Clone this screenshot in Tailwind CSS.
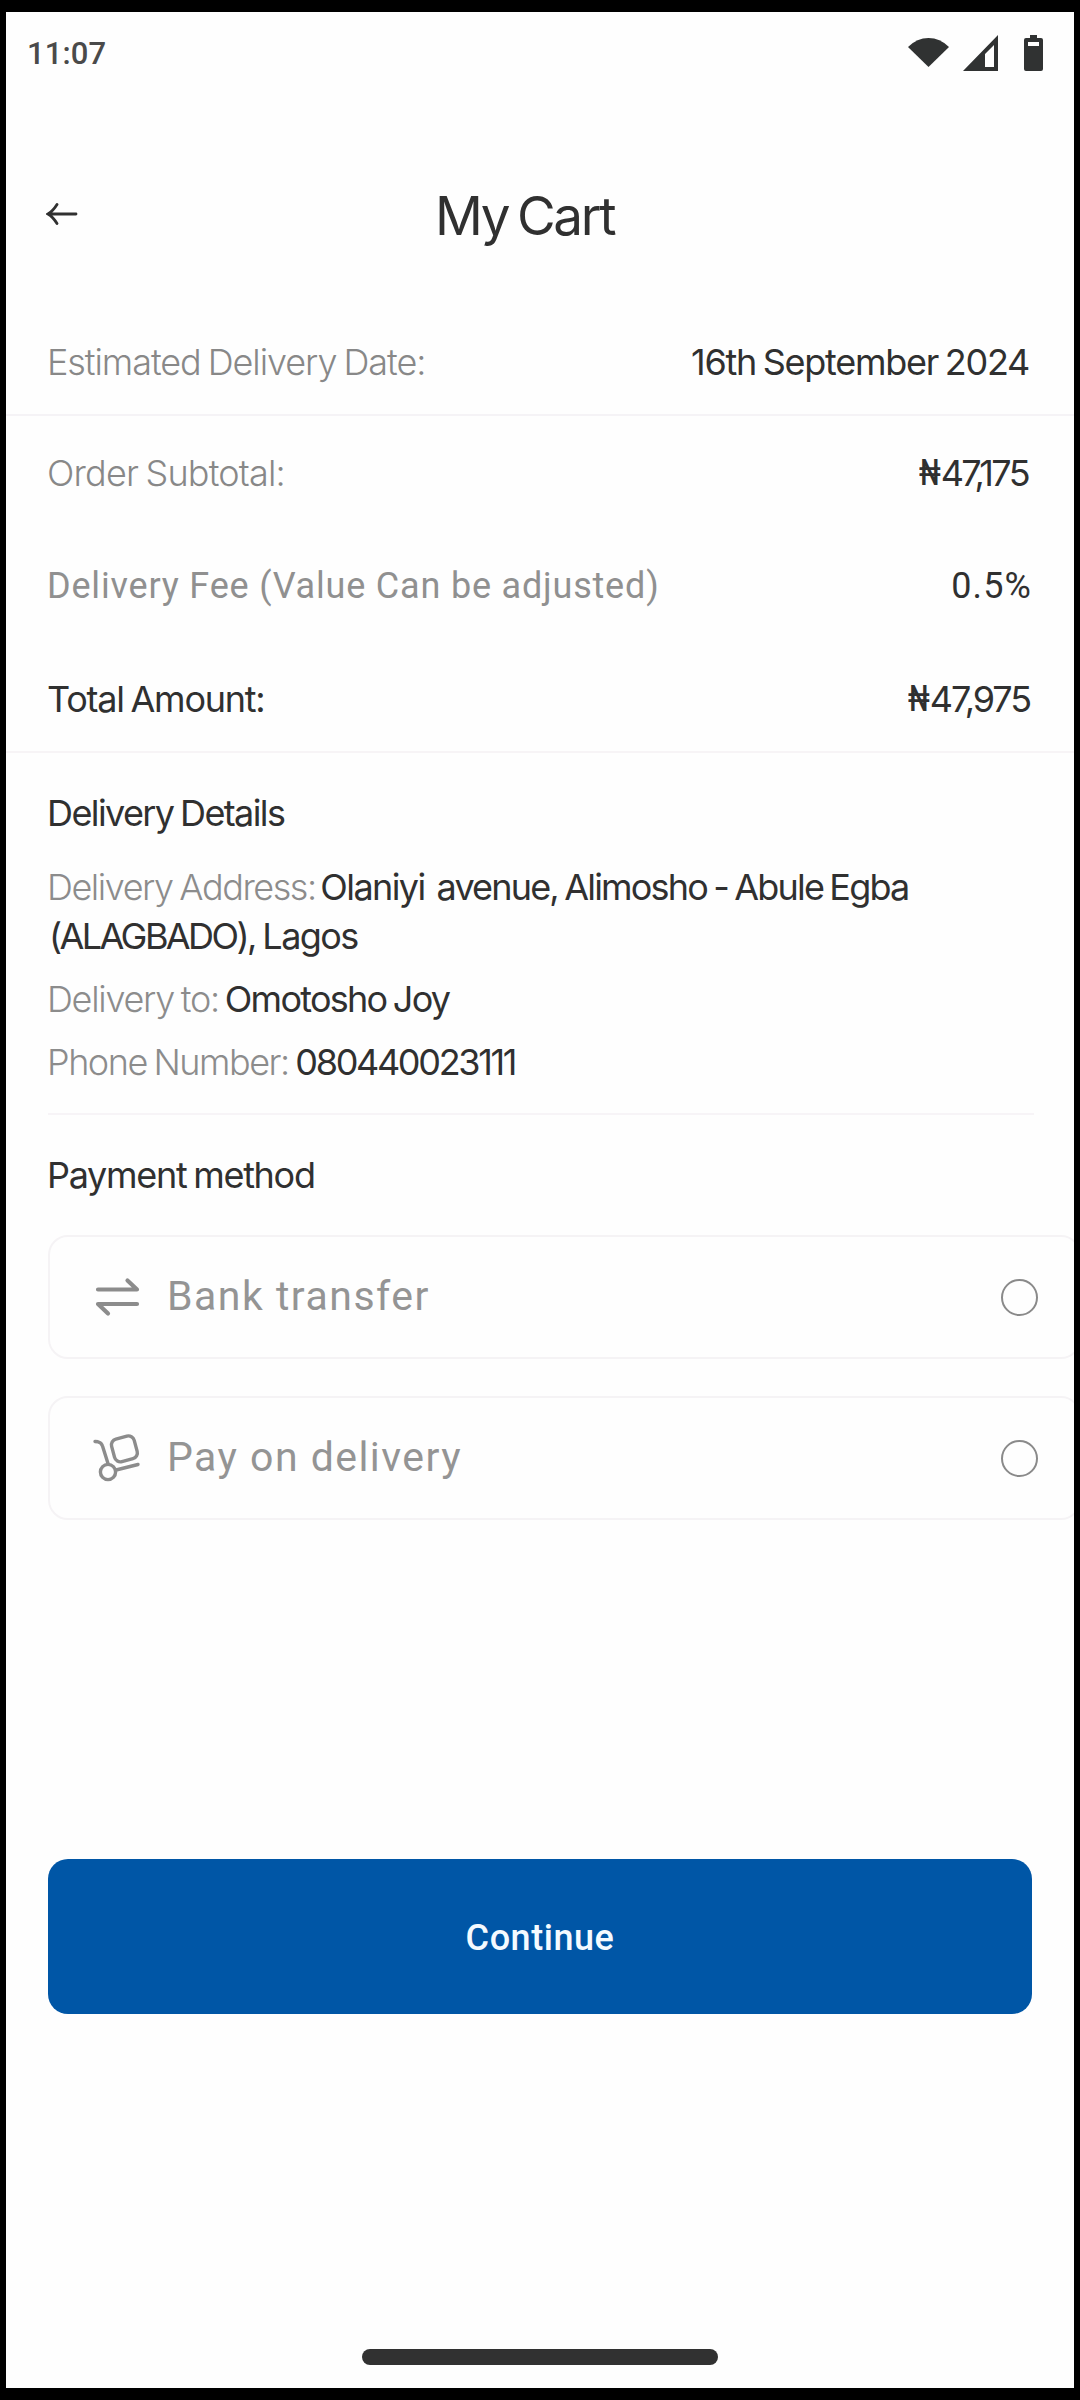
<!DOCTYPE html>
<html lang="en">
<head>
<meta charset="utf-8">
<title>My Cart</title>
<script src="https://cdn.jsdelivr.net/npm/@tailwindcss/browser@4"></script>
</head>
<body class="bg-black">
<div class="flex h-[2400px] w-[1080px] bg-black px-[6px] py-[12px]">
<main class="flex w-[1068px] flex-col overflow-hidden bg-[#fefefe] font-['Inter',sans-serif] text-[36px] leading-[48px] whitespace-nowrap text-[#303030]">

  <!-- Status bar -->
  <div class="flex h-[82px] shrink-0 items-center justify-between pr-[31px] pl-[21px]">
    <span class="pt-[2px] font-['Roboto',sans-serif] text-[31px] font-medium tracking-[0.1px] text-[#4a4a4a]">11:07</span>
    <div class="flex items-center text-[#303232]">
      <svg class="mr-[14px] h-[36px] w-[41px]" viewBox="0 0 41 36" fill="currentColor"><path d="M0 12Q9 3 20.500 3T41 12L20.500 32Z"/></svg>
      <svg class="mr-[26px] h-[36px] w-[35px]" viewBox="0 0 35 36" fill="currentColor"><path fill-rule="evenodd" d="M35 0V36H0ZM31 10L22 19V32H31Z"/></svg>
      <svg class="h-[36px] w-[19px]" viewBox="0 0 19 36" fill="currentColor"><path fill-rule="evenodd" d="M6 0H13V3H17Q19 3 19 5V34Q19 36 17 36H2Q0 36 0 34V5Q0 3 2 3H6ZM4 7V11H15V7Z"/></svg>
    </div>
  </div>

  <!-- Title -->
  <header class="grid h-[244px] shrink-0 grid-cols-[389px_1fr] items-center pl-[40px]">
    <svg class="mb-[5px] h-[24px] w-[32px]" viewBox="0 0 32 24" fill="none" stroke="#303030" stroke-width="2.800" stroke-linecap="round"><path d="M2 12H30M11 2.500Q7 9 2 12Q7 15 11 21.500"/></svg>
    <h1 class="text-[53px] font-normal tracking-[-2.3px] [word-spacing:-4px]">My Cart</h1>
  </header>

  <!-- Delivery date -->
  <section class="flex shrink-0 justify-between border-b-2 border-[#f5f3f6] pr-[45px] pb-[28px] pl-[41px] [word-spacing:-2px]">
    <span class="font-light tracking-[-1.07px] text-[#888]">Estimated Delivery Date:</span>
    <span class="tracking-[-1.28px]">16th September 2024</span>
  </section>

  <!-- Totals -->
  <section class="flex shrink-0 flex-col border-b-2 border-[#f7f4f6] pt-[33px] pr-[44px] pb-[28px] pl-[41px]">
    <div class="flex h-[48px] justify-between">
      <span class="font-light tracking-[-0.8px] text-[#888] [word-spacing:-2px]">Order Subtotal:</span>
      <span class="mr-[2px] tracking-[-2.6px]"><span class="mr-[-7px] inline-block h-[48px] origin-left scale-x-75 align-top font-['Roboto',sans-serif] font-medium tracking-normal">₦</span>47,175</span>
    </div>
    <div class="mt-[65px] flex h-[48px] justify-between font-['Roboto',sans-serif]">
      <span class="tracking-[0.81px] text-[#909090]">Delivery Fee (Value Can be adjusted)</span>
      <span class="mr-[-2px] tracking-[1.1px]">0.5%</span>
    </div>
    <div class="mt-[65px] flex h-[48px] justify-between">
      <span class="tracking-[-1.25px] [word-spacing:-2px]">Total Amount:</span>
      <span class="tracking-[-2.1px]"><span class="mr-[-7px] inline-block h-[48px] origin-left scale-x-75 align-top font-['Roboto',sans-serif] font-medium tracking-normal">₦</span>47,975</span>
    </div>
  </section>

  <!-- Delivery details -->
  <section class="mr-[40px] ml-[42px] flex shrink-0 flex-col border-b-2 border-[#f7f4f7] pt-[36px] pb-[26px] [word-spacing:-2px]">
    <h2 class="ml-[-1px] tracking-[-1.6px]">Delivery Details</h2>
    <p class="mt-[26px] ml-[-1px] h-[100px] leading-[49px]"><span class="font-light tracking-[-1.45px] text-[#8c8c8c]">Delivery Address: </span><span class="ml-[-2px] tracking-[-1.61px]">Olaniyi&nbsp; </span><span class="ml-[-1px] tracking-[-1.82px]">avenue, Alimosho - Abule Egba</span><br><span class="ml-[2px] tracking-[-2.58px] [word-spacing:0px]">(ALAGBADO), </span><span class="tracking-[-1.56px]">Lagos</span></p>
    <p class="mt-[11px] ml-[-1px] h-[50px] leading-[50px]"><span class="font-light tracking-[-1.28px] text-[#8c8c8c]">Delivery to: </span><span class="ml-[-1px] tracking-[-1.74px]">Omotosho Joy</span></p>
    <p class="mt-[13px] ml-[-1px] h-[50px] leading-[50px]"><span class="font-light tracking-[-1.48px] text-[#8c8c8c]">Phone Number: </span><span class="tracking-[-2.33px]">080440023111</span></p>
  </section>

  <!-- Payment method -->
  <section class="flex shrink-0 flex-col pt-[36px] pl-[42px]">
    <h2 class="ml-[-1px] tracking-[-1.3px] [word-spacing:-2px]">Payment method</h2>
    <div class="mt-[36px] flex flex-col gap-[37px] font-['Roboto',sans-serif] text-[41px] text-[#949494]">
      <div class="flex h-[124px] w-[1033px] items-center rounded-[20px] border-2 border-[#f5f3f5] pr-[41px] pl-[42px]">
        <svg class="h-[52px] w-[50px]" viewBox="0 0 50 52" fill="none" stroke="#8c8c8c" stroke-width="4.200" stroke-linecap="round" stroke-linejoin="round"><path d="M6 18.500H45L35.500 9.500M45 33H6L16 42.500"/></svg>
        <span class="mb-[2px] ml-[25px] tracking-[1.5px]">Bank transfer</span>
        <span class="ml-auto size-[37px] rounded-full border-[2.500px] border-[#8a8a8a]"></span>
      </div>
      <div class="flex h-[124px] w-[1033px] items-center rounded-[20px] border-2 border-[#f5f3f5] pr-[41px] pl-[42px]">
        <svg class="h-[52px] w-[50px]" viewBox="0 0 50 52" fill="none" stroke="#8c8c8c" stroke-width="3.400" stroke-linecap="round"><path d="M3 9.500L6 9.800Q9.500 10.500 10.500 14L16 31.500M24 38L46 32.500"/><circle cx="16" cy="40" r="7.600"/><rect x="20.700" y="5.200" width="23.400" height="23.400" rx="6" transform="rotate(-15 32.400 16.900)"/></svg>
        <span class="mb-[2px] ml-[25px] tracking-[1.46px]">Pay on delivery</span>
        <span class="ml-auto size-[37px] rounded-full border-[2.500px] border-[#8a8a8a]"></span>
      </div>
    </div>
  </section>

  <button class="mt-[339px] ml-[42px] h-[155px] w-[984px] shrink-0 rounded-[20px] bg-[#0056a6] pt-[3px] font-['Roboto',sans-serif] text-[36px] font-medium tracking-[0.54px] text-[#f4faff]">Continue</button>

  <!-- Home indicator -->
  <div class="mx-auto mt-[335px] h-[16px] w-[356px] shrink-0 rounded-full bg-[#313131]"></div>
</main>
</div>
</body>
</html>
